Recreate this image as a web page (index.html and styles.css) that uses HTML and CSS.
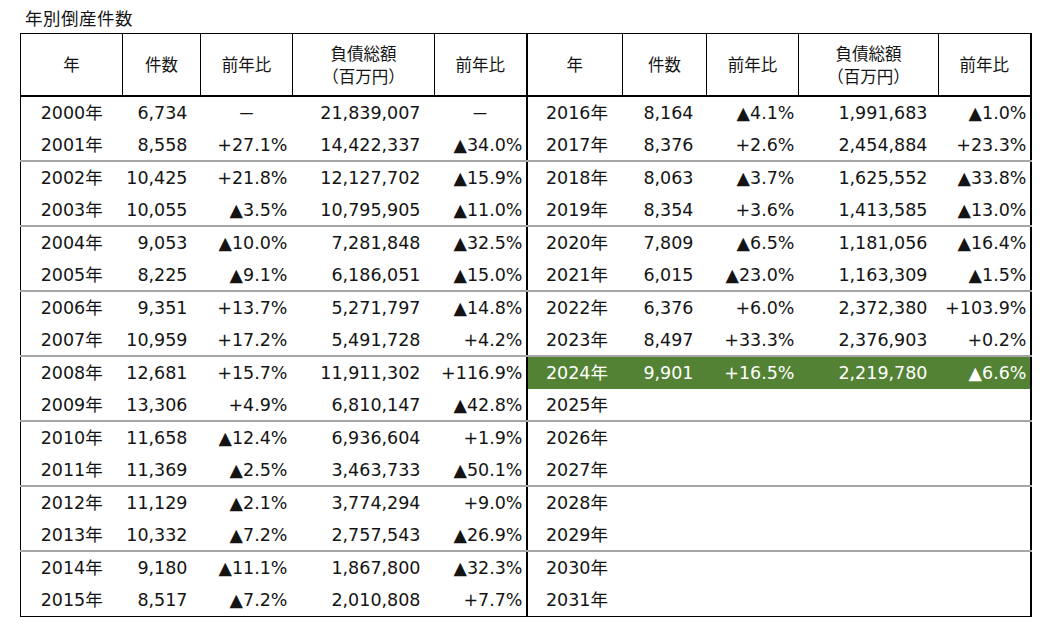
FILE: index.html
```html
<!DOCTYPE html>
<html lang="ja">
<head>
<meta charset="utf-8">
<title>年別倒産件数</title>
<link rel="stylesheet" href="styles.css">
</head>
<body>
<div class="title">年別倒産件数</div>
<table class="stats">
  <colgroup>
    <col class="w-year-l"><col class="w-cnt-l"><col class="w-pct-l"><col class="w-debt-l"><col class="w-pct2-l">
    <col class="w-year-r"><col class="w-cnt-r"><col class="w-pct-r"><col class="w-debt-r"><col class="w-pct2-r">
  </colgroup>
  <thead>
    <tr>
      <th>年</th><th>件数</th><th>前年比</th><th>負債総額<br>（百万円）</th><th>前年比</th>
      <th class="mid">年</th><th>件数</th><th>前年比</th><th>負債総額<br>（百万円）</th><th>前年比</th>
    </tr>
  </thead>
  <tbody>
    <tr><td>2000年</td><td>6,734</td><td class="ctr">－</td><td>21,839,007</td><td class="ctr">－</td><td class="mid">2016年</td><td>8,164</td><td>▲4.1%</td><td>1,991,683</td><td>▲1.0%</td></tr>
    <tr class="sep"><td>2001年</td><td>8,558</td><td>+27.1%</td><td>14,422,337</td><td>▲34.0%</td><td class="mid">2017年</td><td>8,376</td><td>+2.6%</td><td>2,454,884</td><td>+23.3%</td></tr>
    <tr><td>2002年</td><td>10,425</td><td>+21.8%</td><td>12,127,702</td><td>▲15.9%</td><td class="mid">2018年</td><td>8,063</td><td>▲3.7%</td><td>1,625,552</td><td>▲33.8%</td></tr>
    <tr class="sep"><td>2003年</td><td>10,055</td><td>▲3.5%</td><td>10,795,905</td><td>▲11.0%</td><td class="mid">2019年</td><td>8,354</td><td>+3.6%</td><td>1,413,585</td><td>▲13.0%</td></tr>
    <tr><td>2004年</td><td>9,053</td><td>▲10.0%</td><td>7,281,848</td><td>▲32.5%</td><td class="mid">2020年</td><td>7,809</td><td>▲6.5%</td><td>1,181,056</td><td>▲16.4%</td></tr>
    <tr class="sep"><td>2005年</td><td>8,225</td><td>▲9.1%</td><td>6,186,051</td><td>▲15.0%</td><td class="mid">2021年</td><td>6,015</td><td>▲23.0%</td><td>1,163,309</td><td>▲1.5%</td></tr>
    <tr><td>2006年</td><td>9,351</td><td>+13.7%</td><td>5,271,797</td><td>▲14.8%</td><td class="mid">2022年</td><td>6,376</td><td>+6.0%</td><td>2,372,380</td><td>+103.9%</td></tr>
    <tr class="sep"><td>2007年</td><td>10,959</td><td>+17.2%</td><td>5,491,728</td><td>+4.2%</td><td class="mid">2023年</td><td>8,497</td><td>+33.3%</td><td>2,376,903</td><td>+0.2%</td></tr>
    <tr class="hl"><td>2008年</td><td>12,681</td><td>+15.7%</td><td>11,911,302</td><td>+116.9%</td><td class="mid">2024年</td><td>9,901</td><td>+16.5%</td><td>2,219,780</td><td>▲6.6%</td></tr>
    <tr class="sep"><td>2009年</td><td>13,306</td><td>+4.9%</td><td>6,810,147</td><td>▲42.8%</td><td class="mid">2025年</td><td></td><td></td><td></td><td></td></tr>
    <tr><td>2010年</td><td>11,658</td><td>▲12.4%</td><td>6,936,604</td><td>+1.9%</td><td class="mid">2026年</td><td></td><td></td><td></td><td></td></tr>
    <tr class="sep"><td>2011年</td><td>11,369</td><td>▲2.5%</td><td>3,463,733</td><td>▲50.1%</td><td class="mid">2027年</td><td></td><td></td><td></td><td></td></tr>
    <tr><td>2012年</td><td>11,129</td><td>▲2.1%</td><td>3,774,294</td><td>+9.0%</td><td class="mid">2028年</td><td></td><td></td><td></td><td></td></tr>
    <tr class="sep"><td>2013年</td><td>10,332</td><td>▲7.2%</td><td>2,757,543</td><td>▲26.9%</td><td class="mid">2029年</td><td></td><td></td><td></td><td></td></tr>
    <tr><td>2014年</td><td>9,180</td><td>▲11.1%</td><td>1,867,800</td><td>▲32.3%</td><td class="mid">2030年</td><td></td><td></td><td></td><td></td></tr>
    <tr class="last"><td>2015年</td><td>8,517</td><td>▲7.2%</td><td>2,010,808</td><td>+7.7%</td><td class="mid">2031年</td><td></td><td></td><td></td><td></td></tr>
  </tbody>
</table>
</body>
</html>
```

FILE: styles.css
```css
html, body {
  margin: 0;
  padding: 0;
  background: #ffffff;
}

body {
  color: #141414;
  font-family: "DejaVu Sans", "Noto Sans CJK JP", sans-serif;
}

.title {
  font-family: "Noto Sans CJK JP", sans-serif;
  font-size: 17.5px;
  line-height: 24px;
  padding: 6px 0 0 25px;
  height: 27px;
  letter-spacing: 0.5px;
}

.stats {
  margin-left: 20px;
  border-collapse: collapse;
  table-layout: fixed;
  width: 1011px;
  border-top: 1px solid #000;
  border-left: 1px solid #000;
  border-right: 2px solid #000;
  border-bottom: 1px solid #000;
}

.w-year-l { width: 102px; }
.w-cnt-l { width: 78px; }
.w-pct-l { width: 92px; }
.w-debt-l { width: 142px; }
.w-pct2-l { width: 92px; }
.w-year-r { width: 96px; }
.w-cnt-r { width: 84px; }
.w-pct-r { width: 92px; }
.w-debt-r { width: 140px; }
.w-pct2-r { width: 92px; }

.stats th {
  font-family: "Noto Sans CJK JP", sans-serif;
  font-weight: normal;
  font-size: 16.5px;
  line-height: 23px;
  height: 61px;
  padding: 0;
  text-align: center;
  vertical-align: middle;
  border: 1px solid #000;
  border-bottom: 2px solid #000;
}

.stats td {
  font-size: 17.5px;
  height: 32px;
  line-height: 20px;
  padding: 0;
  vertical-align: middle;
  text-align: right;
  white-space: nowrap;
}

.stats td:nth-child(5n+1) { text-align: center; padding-left: 0; }
.stats td:nth-child(2) { padding-right: 13px; }
.stats td:nth-child(3) { padding-right: 5px; }
.stats td:nth-child(4) { padding-right: 14px; }
.stats td:nth-child(5) { padding-right: 3px; }
.stats td:nth-child(6) { padding-left: 4px; }
.stats td:nth-child(7) { padding-right: 13px; }
.stats td:nth-child(8) { padding-right: 4px; }
.stats td:nth-child(9) { padding-right: 11px; }
.stats td:nth-child(10) { padding-right: 3px; }

.stats td.ctr {
  text-align: center;
  padding-right: 0;
  font-family: "Noto Sans CJK JP", sans-serif;
}

.stats .mid {
  border-left: 2px solid #000;
}

.stats tr.sep td {
  height: 31px;
  border-bottom: 2px solid #a6a6a6;
}

.stats tr.last td {
  border-bottom: 1px solid #000;
}

.stats tr.hl td:nth-child(n+6) {
  background: #548235;
  color: #ffffff;
}
```
